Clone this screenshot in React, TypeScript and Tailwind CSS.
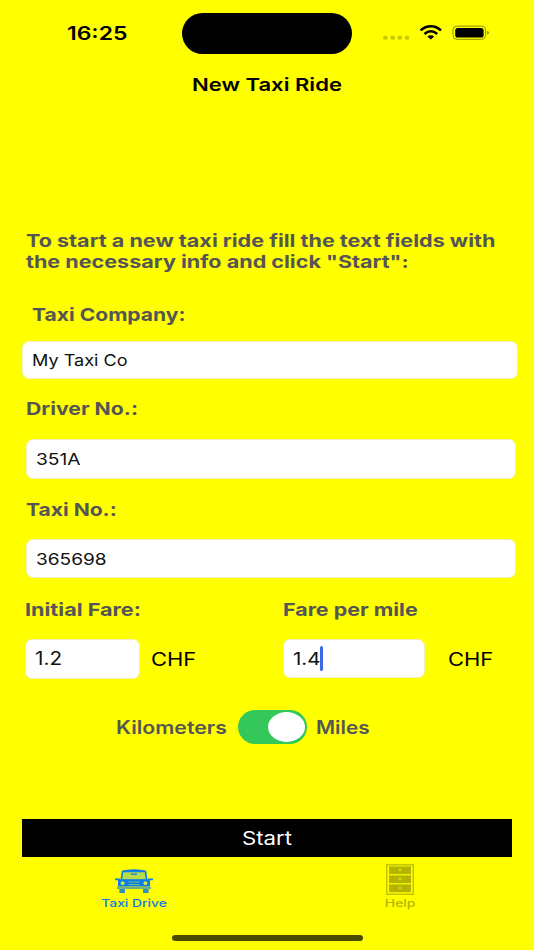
import type { ReactNode } from 'react';
import clsx from 'clsx';

// Wide system-style lettering, stretched from its left edge
function Wide({ className, children }: { className?: string; children: ReactNode }) {
  return (
    <span className={clsx('inline-block whitespace-nowrap', className)}>
      {children}
    </span>
  );
}

function Field({ className, children }: { className?: string; children: ReactNode }) {
  return (
    <div className={clsx('flex items-center rounded-[7px] border border-[#efefc0] bg-white pl-[9px] text-[#111]', className)}>
      {children}
    </div>
  );
}

function StatusBar() {
  return (
    <div className="flex h-[66px] items-center text-black">
      <div className="w-[182px] pl-[67px]">
        <Wide className="origin-left scale-x-[1.24] text-[18.5px] font-semibold">16:25</Wide>
      </div>
      <div className="h-[41px] w-[170px] rounded-full bg-black" />
      <svg className="ml-[30px]" width="110" height="20" viewBox="0 0 110 20">
        <g fill="#c9c900">
          <rect x="1" y="12.8" width="4.8" height="4" rx="1.8" />
          <rect x="8.2" y="12.8" width="4.8" height="4" rx="1.8" />
          <rect x="15.4" y="12.8" width="4.8" height="4" rx="1.8" />
          <rect x="22.6" y="12.8" width="4.8" height="4" rx="1.8" />
        </g>
        <g fill="none" stroke="#000" strokeWidth="2.5">
          <path d="M38.6 7.4C44.6 1.9 53 1.9 59 7.4" />
          <path d="M42.4 11C46.4 7.6 51.2 7.6 55.2 11" />
        </g>
        <path d="M45.4 13.6Q48.8 11 52.2 13.6L48.8 16.6Z" />
        <rect x="71" y="3.1" width="32.6" height="13.2" rx="4" fill="none" stroke="#8f8f00" />
        <rect x="73.2" y="5" width="28.4" height="9.6" rx="2.6" />
        <path d="M105.2 7.7Q106.9 8.3 106.9 9.8T105.2 11.8Z" fill="#8f8f00" />
      </svg>
    </div>
  );
}

function CarIcon() {
  return (
    <svg width="38" height="25" viewBox="0 0 38 25">
      <path d="M7.6 2.4Q19 .2 30.4 2.4L31.8 11H6.2Z" fill="#b7dc48" stroke="#0a7bea" strokeWidth="1.6" />
      <path d="M7 2.2Q19-1.4 31 2.2V3.2H7Z" fill="#0a7bea" />
      <path d="M16 4.6h6v1.3h-6Z" fill="#0a7bea" />
      <path d="M0 9.4h4.4L5.6 10.8h26.8l1.2-1.4H38v1.8h-3v6.2H3v-6.2H0Z" fill="#0a7bea" />
      <circle cx="7.6" cy="14.2" r="1.9" fill="#d8ed35" />
      <circle cx="30.4" cy="14.2" r="1.9" fill="#d8ed35" />
      <path d="M13.6 13h10.8M13.6 15.6h10.8" stroke="#7fbf78" strokeWidth="1" />
      <path d="M2 18.8h34" stroke="#6fae80" strokeWidth="2.2" />
      <path d="M4.4 20h5.6v4H4.4ZM28 20h5.6v4H28Z" fill="#2f92b8" />
    </svg>
  );
}

function DrawersIcon() {
  return (
    <svg width="28" height="31" viewBox="0 0 28 31">
      <rect x=".8" y=".8" width="26.4" height="29.4" fill="none" stroke="#c0c000" strokeWidth="1.4" />
      <g fill="#b4b400">
        <rect x="3" y="2.4" width="22" height="7.8" />
        <rect x="3" y="11.4" width="22" height="7.8" />
        <rect x="3" y="20.4" width="22" height="7.8" />
      </g>
      <g fill="#dcdc00">
        <circle cx="14" cy="6" r="1.3" />
        <circle cx="14" cy="15" r="1.3" />
        <circle cx="14" cy="24" r="1.3" />
      </g>
    </svg>
  );
}

export default function App() {
  return (
    <div className="flex h-[950px] w-[534px] flex-col overflow-hidden bg-[#ffff00] font-['Inter',sans-serif] text-[18px] leading-[22px] text-[#555]">
      <StatusBar />

      <h1 className="flex h-[38px] items-center pl-[192px] text-[17.5px] font-semibold text-black">
        <Wide className="origin-left scale-x-[1.26]">New Taxi Ride</Wide>
      </h1>

      <p className="mt-[126px] pl-[26px] text-[17.5px] leading-[21px] font-bold">
        <Wide className="origin-left scale-x-[1.232]">
          To start a new taxi ride fill the text fields with
          <br />
          the necessary info and click "Start":
        </Wide>
      </p>

      <div className="mt-[32px] h-[37px] pl-[32px] font-bold">
        <Wide className="origin-left scale-x-[1.17]">Taxi Company:</Wide>
      </div>
      <Field className="ml-[22px] h-[38px] w-[496px] text-[16px]">
        <Wide className="origin-left scale-x-[1.13]">My Taxi Co</Wide>
      </Field>

      <div className="mt-[19px] h-[41px] pl-[26px] font-bold">
        <Wide className="origin-left scale-x-[1.18]">Driver No.:</Wide>
      </div>
      <Field className="ml-[26px] h-[40px] w-[490px] text-[16px]">
        <Wide className="origin-left scale-x-[1.2]">351A</Wide>
      </Field>

      <div className="mt-[20px] h-[40px] pl-[26px] font-bold">
        <Wide className="origin-left scale-x-[1.17]">Taxi No.:</Wide>
      </div>
      <Field className="ml-[26px] h-[39px] w-[490px] text-[16px]">
        <Wide className="origin-left scale-x-[1.19]">365698</Wide>
      </Field>

      <div className="mt-[21px] flex h-[40px] pl-[25px] font-bold">
        <div className="w-[258px]">
          <Wide className="origin-left scale-x-[1.2]">Initial Fare:</Wide>
        </div>
        <Wide className="origin-left scale-x-[1.19]">Fare per mile</Wide>
      </div>
      <div className="flex h-[40px] items-start pl-[25px]">
        <Field className="h-[40px] w-[115px]">
          <Wide className="origin-left scale-x-[1.15]">1.2</Wide>
        </Field>
        <div className="flex h-[41px] w-[143px] items-center pl-[11px] text-black">
          <Wide className="origin-left scale-x-[1.22]">CHF</Wide>
        </div>
        <Field className="h-[39px] w-[142px] pl-[8px] text-[17.5px]">
          <div className="w-[27px]">
            <Wide className="origin-left scale-x-[1.17]">1.4</Wide>
          </div>
          <div className="h-[25px] w-[3px] rounded-full bg-[#3f68e8]" />
        </Field>
        <div className="flex h-[41px] items-center pl-[23px] text-black">
          <Wide className="origin-left scale-x-[1.22]">CHF</Wide>
        </div>
      </div>

      <div className="mt-[31px] flex h-[34px] items-center pl-[116px] font-semibold">
        <div className="w-[122px] pt-px">
          <Wide className="origin-left scale-x-[1.18]">Kilometers</Wide>
        </div>
        <div className="flex h-[34px] w-[69px] items-center justify-end rounded-full bg-[#34c759] pr-[2px]">
          <div className="h-[30px] w-[37px] rounded-[50%] bg-white" />
        </div>
        <div className="pt-px pl-[9px]">
          <Wide className="origin-left scale-x-[1.15]">Miles</Wide>
        </div>
      </div>

      <button className="mt-[75px] ml-[22px] h-[38px] w-[490px] bg-black pl-[219.5px] text-left text-[18.5px] text-white">
        <Wide className="origin-left scale-x-[1.2]">Start</Wide>
      </button>

      <nav className="flex h-[78px] text-[11px] leading-[14px] font-medium">
        <div className="flex w-[267px] flex-col items-center pt-[12px] pl-px text-[#0a7bea]">
          <CarIcon />
          <Wide className="mt-[2px] scale-x-[1.26]">Taxi Drive</Wide>
        </div>
        <div className="flex w-[266px] flex-col items-center pt-[7px] text-[#b4b400]">
          <DrawersIcon />
          <Wide className="mt-px scale-x-[1.27]">Help</Wide>
        </div>
      </nav>
      <div className="ml-[172px] h-[6px] w-[191px] rounded-full bg-[#4c4c00]" />
    </div>
  );
}
